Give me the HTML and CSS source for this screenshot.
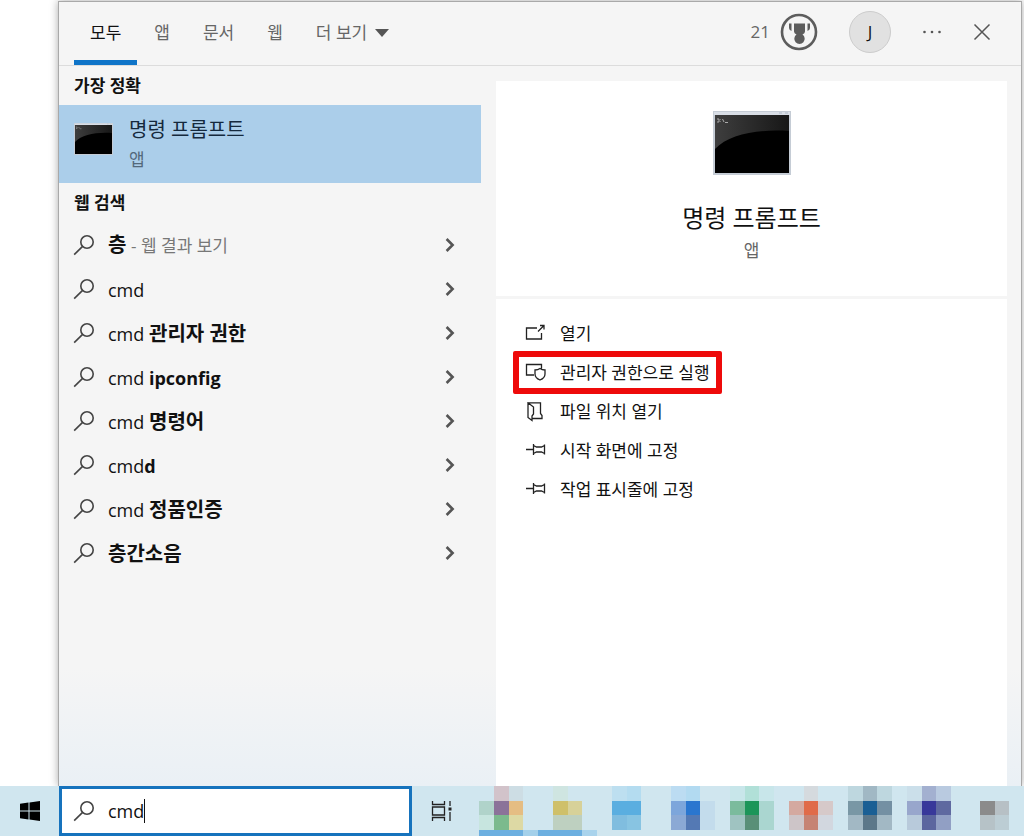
FILE: index.html
```html
<!DOCTYPE html>
<html lang="ko">
<head>
<meta charset="utf-8">
<meta name="viewport" content="width=device-width, initial-scale=1">
<title>검색</title>
<link rel="stylesheet" href="styles.css">
</head>
<body>
<svg class="defs" aria-hidden="true">
  <symbol id="search" viewBox="0 0 22 22"><circle cx="14" cy="8" r="6.2"/><path d="M9.600 12.400 1.200 20.600"/></symbol>
  <symbol id="chevron" viewBox="0 0 10 16"><path d="M1.600 2 7.600 8l-6 6"/></symbol>
  <symbol id="pin" viewBox="0 0 22 20"><path d="M1 8.500h7.500M8.500 3v11M8.500 4.500l3 1.500h5l3-1.500M8.500 12.500l3-1.500h5l3 1.500M19.500 3.500v10"/></symbol>
  <symbol id="console" viewBox="0 0 78 64">
    <rect width="78" height="64" fill="#c5ccd5"/>
    <rect x="1" y="1" width="76" height="3" fill="#d9dee6"/>
    <path d="M66 2h3M72 2h3" stroke="#aeb8c5"/>
    <rect x="2" y="4" width="74" height="58" fill="#000"/>
    <path d="M2 4h74v16C44 18 16 23 2 38z" fill="url(#gloss)"/>
    <path d="M4 8h2v3H4M7.500 8v.5M7.500 10.500v.5M9.500 8l1.500 3M12 11.500h3" stroke="#aaa" fill="none"/>
  </symbol>
  <linearGradient id="gloss" x1="0" y1="0" x2="1" y2="0"><stop stop-color="#3e3e3e"/><stop offset="1" stop-color="#171717"/></linearGradient>
</svg>

<main class="panel">
  <header class="top">
    <nav class="tabs">
      <button class="tab active">모두</button>
      <button class="tab">앱</button>
      <button class="tab">문서</button>
      <button class="tab">웹</button>
      <button class="tab">더 보기 <svg class="caret" viewBox="0 0 14 8"><path d="M0 0h14L7 8z"/></svg></button>
    </nav>
    <div class="account">
      <button class="points">21
        <svg class="medal" viewBox="0 0 38 38"><circle cx="19" cy="19" r="17" fill="none" stroke="#5d5d5d" stroke-width="2.600"/><path d="M14 10.500h11v8q0 2-2.500 3a5.200 5.200 0 1 1-6 0q-2.500-1-2.500-3zM9 10.500h2.500v7.500Q9 17 9 15zM27.500 10.500H30V15q0 2-2.500 3z" fill="#5d5d5d"/></svg>
      </button>
      <button class="avatar">J</button>
      <button class="icon-button" aria-label="옵션"><svg class="dots" viewBox="0 0 20 4"><circle cx="2.500" cy="2" r="1.300"/><circle cx="10" cy="2" r="1.300"/><circle cx="17.500" cy="2" r="1.300"/></svg></button>
      <button class="icon-button" aria-label="닫기"><svg class="close" viewBox="0 0 18 18"><path d="M1.500 1.500l15 15M16.500 1.500l-15 15"/></svg></button>
    </div>
  </header>

  <div class="content">
    <section class="results">
      <h2 class="heading">가장 정확</h2>
      <button class="best">
        <svg class="best-icon" viewBox="0 0 78 64" preserveAspectRatio="none"><use href="#console"/></svg>
        <span class="best-text"><span class="best-title">명령 프롬프트</span><span class="kind">앱</span></span>
      </button>
      <h2 class="heading web">웹 검색</h2>
      <ul class="list">
        <li><button class="row"><svg class="search"><use href="#search"/></svg><span class="query"><b class="ko">층</b> <span class="hint">- 웹 결과 보기</span></span><svg class="chevron"><use href="#chevron"/></svg></button></li>
        <li><button class="row"><svg class="search"><use href="#search"/></svg><span class="query">cmd</span><svg class="chevron"><use href="#chevron"/></svg></button></li>
        <li><button class="row"><svg class="search"><use href="#search"/></svg><span class="query">cmd <b class="ko">관리자 권한</b></span><svg class="chevron"><use href="#chevron"/></svg></button></li>
        <li><button class="row"><svg class="search"><use href="#search"/></svg><span class="query">cmd <b>ipconfig</b></span><svg class="chevron"><use href="#chevron"/></svg></button></li>
        <li><button class="row"><svg class="search"><use href="#search"/></svg><span class="query">cmd <b class="ko">명령어</b></span><svg class="chevron"><use href="#chevron"/></svg></button></li>
        <li><button class="row"><svg class="search"><use href="#search"/></svg><span class="query">cmd<b>d</b></span><svg class="chevron"><use href="#chevron"/></svg></button></li>
        <li><button class="row"><svg class="search"><use href="#search"/></svg><span class="query">cmd <b class="ko">정품인증</b></span><svg class="chevron"><use href="#chevron"/></svg></button></li>
        <li><button class="row"><svg class="search"><use href="#search"/></svg><span class="query"><b class="ko">층간소음</b></span><svg class="chevron"><use href="#chevron"/></svg></button></li>
      </ul>
    </section>

    <section class="detail">
      <div class="hero">
        <svg class="hero-icon"><use href="#console"/></svg>
        <h1 class="hero-title">명령 프롬프트</h1>
        <span class="kind">앱</span>
      </div>
      <div class="actions">
        <button class="action"><svg class="glyph" viewBox="0 0 22 20"><path d="M12 4H1.500v11h15V9M13 7.500l6-6M15 1.500h4v4"/></svg>열기</button>
        <button class="action marked"><svg class="glyph" viewBox="0 0 22 20"><path d="M9 12H1.500V1.500h15v4M15 5.500c2 1.500 3 1.500 5 1.500v4c0 3-2.500 5-5 6-2.500-1-5-3-5-6V7c2 0 3 0 5-1.500z"/></svg>관리자 권한으로 실행</button>
        <button class="action"><svg class="glyph" viewBox="0 0 22 20"><path d="M3 .8h12.500v10.700l1.500 2v3H7.500M3 .8v14.700l4 3V14l1.500-2V5z"/></svg>파일 위치 열기</button>
        <button class="action"><svg class="glyph"><use href="#pin"/></svg>시작 화면에 고정</button>
        <button class="action"><svg class="glyph"><use href="#pin"/></svg>작업 표시줄에 고정</button>
      </div>
    </section>
  </div>
</main>

<footer class="taskbar">
  <button class="start" aria-label="시작"><svg class="windows" viewBox="0 0 20 20"><path d="M0 2.800 8.500 1.600v7.900H0zM9.500 1.400 20 0v9.500H9.500zM0 10.500h8.500v7.900L0 17.200zM9.500 10.500H20V20L9.500 18.600z"/></svg></button>
  <label class="searchbox"><svg class="search"><use href="#search"/></svg><input class="field" type="text" value="cmd" size="3" aria-label="검색"><span class="cursor"></span></label>
  <button class="tasks" aria-label="작업 보기"><svg class="timeline" viewBox="0 0 22 20"><path d="M1.500 0v3.500h12V0M1.500 6h12v8h-12zM1.500 20v-3.500h12V20M19 0v5M19 11v9"/><rect x="17.500" y="6.500" width="3" height="3" fill="#222" stroke="none"/></svg></button>
  <div class="apps">
    <button class="app" aria-label="앱 1"><svg viewBox="0 0 59 50"><path fill="#d2c3ca" d="M15 0h15v15H15z"/><path fill="#cddde4" d="M30 0h14v15H30z"/><path fill="#b0d3ca" d="M0 15h15v14H0z"/><path fill="#8b7399" d="M15 15h15v14H15z"/><path fill="#e5bd83" d="M30 15h14v14H30z"/><path fill="#c7e5df" d="M0 29h15v15H0z"/><path fill="#7bba8d" d="M15 29h15v15H15z"/><path fill="#ddd9a4" d="M30 29h14v15H30z"/><path fill="#6cafe0" d="M0 44h44v6H0z"/><path fill="#a3d0ea" d="M44 44h15v6H44z"/></svg></button>
    <button class="app" aria-label="앱 2"><svg viewBox="0 0 59 50"><path fill="#cfe5e1" d="M15 0h15v15H15z"/><path fill="#cfc06a" d="M15 15h15v14H15z"/><path fill="#d7d199" d="M30 15h14v14H30z"/><path fill="#bed0c0" d="M15 29h29v15H15z"/><path fill="#6cafe0" d="M0 44h44v6H0z"/><path fill="#a9d3ec" d="M44 44h15v6H44z"/></svg></button>
    <button class="app" aria-label="앱 3"><svg viewBox="0 0 59 50"><path fill="#bddff0" d="M15 0h15v15H15z"/><path fill="#b4dcf0" d="M30 0h14v15H30z"/><path fill="#5aaee0" d="M15 15h29v14H15z"/><path fill="#80bddf" d="M15 29h15v15H15z"/><path fill="#88c4e2" d="M30 29h14v15H30z"/></svg></button>
    <button class="app" aria-label="앱 4"><svg viewBox="0 0 59 50"><path fill="#bcdcf2" d="M15 0h15v15H15z"/><path fill="#b2daf1" d="M30 0h14v15H30z"/><path fill="#7da6db" d="M15 15h15v14H15z"/><path fill="#2a76cf" d="M30 15h14v14H30z"/><path fill="#c3dcec" d="M44 15h15v29H44z"/><path fill="#8ba9d5" d="M15 29h15v15H15z"/><path fill="#5479b4" d="M30 29h14v15H30z"/></svg></button>
    <button class="app" aria-label="앱 5"><svg viewBox="0 0 59 50"><path fill="#c8e6ea" d="M15 0h44v15H15z"/><path fill="#b1e0d8" d="M30 0h14v15H30z"/><path fill="#7bbb9d" d="M15 15h15v14H15z"/><path fill="#1c9559" d="M30 15h14v14H30z"/><path fill="#aad6d0" d="M44 15h15v29H44z"/><path fill="#9fc3c1" d="M15 29h15v15H15z"/><path fill="#598f77" d="M30 29h14v15H30z"/></svg></button>
    <button class="app" aria-label="앱 6"><svg viewBox="0 0 59 50"><path fill="#d5dade" d="M30 0h14v15H30z"/><path fill="#d4a9a0" d="M15 15h15v14H15z"/><path fill="#e06b49" d="M30 15h14v14H30z"/><path fill="#d6c9c9" d="M44 15h15v14H44z"/><path fill="#cdc5c8" d="M15 29h15v15H15z"/><path fill="#c68373" d="M30 29h14v15H30z"/><path fill="#d2d7df" d="M44 29h15v15H44z"/></svg></button>
    <button class="app" aria-label="앱 7"><svg viewBox="0 0 59 50"><path fill="#bed7df" d="M15 0h44v15H15z"/><path fill="#a1b8c4" d="M30 0h14v15H30z"/><path fill="#7997a5" d="M15 15h15v14H15z"/><path fill="#1a5f94" d="M30 15h14v14H30z"/><path fill="#7490a3" d="M44 15h15v14H44z"/><path fill="#a2b8c4" d="M15 29h44v15H15z"/><path fill="#5c7789" d="M30 29h14v15H30z"/></svg></button>
    <button class="app" aria-label="앱 8"><svg viewBox="0 0 59 50"><path fill="#cbdfea" d="M15 0h15v15H15z"/><path fill="#a3b0d0" d="M30 0h14v15H30z"/><path fill="#b9cae0" d="M44 0h15v15H44z"/><path fill="#98a6cc" d="M15 15h15v14H15z"/><path fill="#38389a" d="M30 15h14v14H30z"/><path fill="#5f69a0" d="M44 15h15v14H44z"/><path fill="#b8cadb" d="M15 29h15v15H15z"/><path fill="#5c669f" d="M30 29h14v15H30z"/><path fill="#919fc4" d="M44 29h15v15H44z"/></svg></button>
    <button class="app" aria-label="앱 9"><svg viewBox="0 0 59 50"><path fill="#8b8b8b" d="M29 15h15v14H29z"/><path fill="#b7c0c5" d="M44 15h14v14H44z"/><path fill="#b6c2c7" d="M29 29h15v15H29z"/><path fill="#bccdd4" d="M44 29h14v15H44z"/></svg></button>
  </div>
</footer>
</body>
</html>
```
FILE: styles.css
```css
* { box-sizing: border-box; }

body {
  margin: 0;
  min-height: 100vh;
  display: flex;
  flex-direction: column;
  overflow-x: hidden;
  background: #fff;
  color: #111;
  font-family: "Open Sans", "Noto Sans CJK KR", sans-serif;
  font-size: 17px;
  line-height: 24px;
}

button {
  border: 0;
  padding: 0;
  background: none;
  color: inherit;
  font: inherit;
  text-align: left;
}

h1, h2, ul { margin: 0; padding: 0; }
ul { list-style: none; }
svg { display: block; flex: none; }
.defs { position: absolute; width: 0; height: 0; }

.panel {
  flex: 1;
  display: flex;
  flex-direction: column;
  margin: 1px 2px 0 58px;
  border: 1px solid #a9a9a9;
  border-bottom: 0;
  background: linear-gradient(#f5f5f5 85%, #eaf0f5);
  box-shadow: 0 0 8px #aaa;
}

.top {
  display: flex;
  justify-content: space-between;
  height: 64px;
  padding: 0 30px 0 15px;
  border-bottom: 1px solid #dcdcdc;
}

.tabs { display: flex; gap: 1px; }

.tab {
  display: flex;
  align-items: center;
  gap: 8px;
  padding: 4px 16px 0;
  border-bottom: 5px solid transparent;
  color: #666;
}

.tab.active { border-color: #0f74c8; color: #111; }
.caret { width: 14px; height: 8px; fill: #555; }

.account {
  display: flex;
  align-items: center;
  gap: 31px;
  padding-bottom: 3px;
  color: #666;
}

.points { display: flex; align-items: center; gap: 10px; }
.medal { width: 38px; height: 38px; }

.avatar {
  width: 42px;
  height: 42px;
  border: 1px solid #ccc;
  border-radius: 50%;
  background: #e1e1e1;
  color: #111;
  text-align: center;
}

.dots { width: 20px; height: 4px; fill: #555; }
.close { width: 18px; height: 18px; stroke: #555; stroke-width: 1.5; }

.content { flex: 1; display: flex; }
.results { flex: 0 0 422px; }

.heading {
  padding: 8px 15px 7px;
  font-size: 17px;
  line-height: 24px;
  font-weight: 700;
}

.heading.web { padding-bottom: 8px; }

.best {
  display: flex;
  align-items: flex-start;
  gap: 16px;
  width: 100%;
  height: 78px;
  padding: 0 15px;
  background: #abceea;
}

.best-icon { width: 39px; height: 32px; margin-top: 18px; }
.best-text { display: flex; flex-direction: column; gap: 4px; padding-top: 11px; }
.best-title { color: #15293d; font-size: 20px; line-height: 28px; }
.best .kind { color: #53687b; }
.kind { color: #666; }

.row {
  display: flex;
  align-items: center;
  width: 100%;
  height: 44px;
  padding: 0 26px 0 14px;
  font-size: 18px;
}

.search {
  width: 22px;
  height: 22px;
  fill: none;
  stroke: #444;
  stroke-width: 1.6;
}

.query { flex: 1; margin-left: 13px; padding-top: 1px; }
.ko { font-size: 20px; }
.hint { color: #777; font-size: 17px; }
.chevron { width: 10px; height: 16px; fill: none; stroke: #555; stroke-width: 2.6; }

.detail {
  flex: 1;
  display: flex;
  flex-direction: column;
  gap: 3px;
  margin: 15px 14px 0 15px;
}

.hero {
  display: flex;
  flex-direction: column;
  align-items: center;
  padding: 30px 0 33px;
  background: #fff;
}

.hero-icon { width: 78px; height: 64px; }

.hero-title {
  margin: 26px 0 4px;
  font-size: 24px;
  line-height: 34px;
  font-weight: 400;
}

.actions {
  flex: 1;
  display: flex;
  flex-direction: column;
  align-items: flex-start;
  padding: 15px 17px;
  background: #fff;
}

.action {
  display: flex;
  align-items: center;
  gap: 13px;
  height: 39px;
  padding: 0 12px;
}

.marked {
  height: 43px;
  margin: -2px 0;
  padding: 0 6px;
  border: 6px solid #ee0a0a;
  border-radius: 2px;
}

.glyph { width: 22px; height: 20px; fill: none; stroke: #222; stroke-width: 1.3; }

.taskbar {
  position: relative;
  display: flex;
  height: 50px;
  background: #d0e6ef;
}

.start { display: flex; align-items: center; justify-content: center; width: 59px; }
.windows { width: 20px; height: 20px; }

.searchbox {
  display: flex;
  align-items: center;
  width: 353px;
  padding: 0 11px;
  border: 3px solid #1673bd;
  background: #fff;
}

.field {
  width: 36px;
  margin-left: 13px;
  padding: 0;
  border: 0;
  outline: 0;
  background: none;
  color: #111;
  font: inherit;
  font-size: 18px;
}

.cursor { width: 1px; height: 24px; background: #111; }
.tasks { display: flex; align-items: center; justify-content: center; width: 67px; padding-right: 7px; }
.timeline { width: 22px; height: 20px; fill: none; stroke: #222; stroke-width: 1.3; }
.apps { flex: 1; display: flex; min-width: 0; overflow: hidden; }
.app { flex: 0 0 59px; }
.app svg { width: 59px; height: 50px; shape-rendering: crispEdges; }
```
